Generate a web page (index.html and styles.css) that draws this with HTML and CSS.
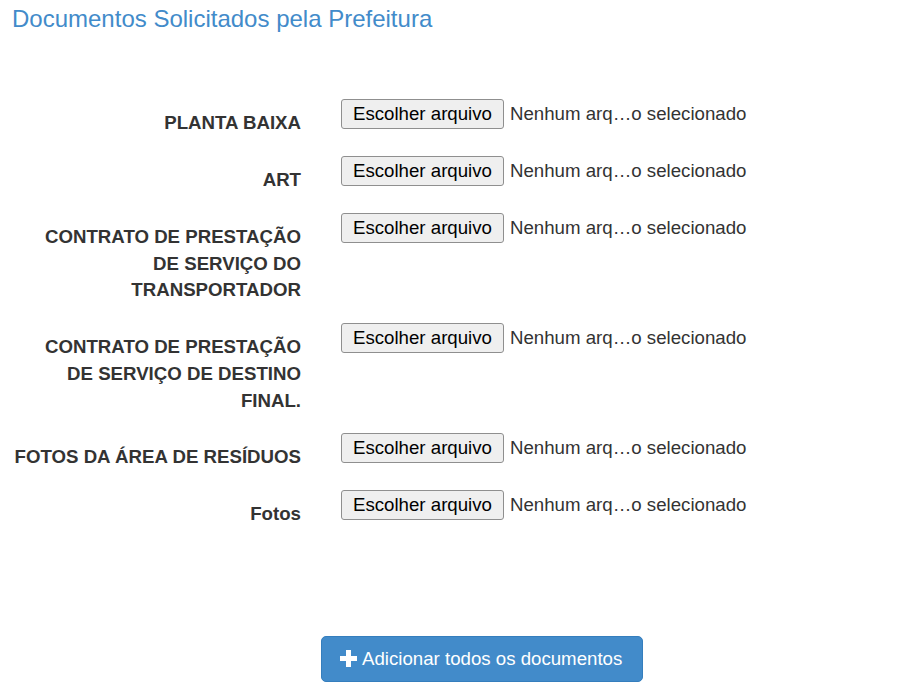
FILE: index.html
```html
<!DOCTYPE html>
<html lang="pt-BR">

<head>
    <meta charset="UTF-8">
    <meta name="viewport" content="width=device-width, initial-scale=1.0">
    <title>Documentos Solicitados pela Prefeitura</title>
    <link rel="stylesheet" href="styles.css">
</head>

<body>
    <h4 class="page-title">Documentos Solicitados pela Prefeitura</h4>

    <form class="doc-form">
        <div class="form-group">
            <label class="control-label">PLANTA BAIXA</label>
            <div class="file-input">
                <span class="file-button">Escolher arquivo</span>
                <span class="file-name">Nenhum arq…o selecionado</span>
            </div>
        </div>

        <div class="form-group">
            <label class="control-label">ART</label>
            <div class="file-input">
                <span class="file-button">Escolher arquivo</span>
                <span class="file-name">Nenhum arq…o selecionado</span>
            </div>
        </div>

        <div class="form-group">
            <label class="control-label">CONTRATO DE PRESTAÇÃO<br>DE SERVIÇO DO<br>TRANSPORTADOR</label>
            <div class="file-input">
                <span class="file-button">Escolher arquivo</span>
                <span class="file-name">Nenhum arq…o selecionado</span>
            </div>
        </div>

        <div class="form-group">
            <label class="control-label">CONTRATO DE PRESTAÇÃO<br>DE SERVIÇO DE DESTINO<br>FINAL.</label>
            <div class="file-input">
                <span class="file-button">Escolher arquivo</span>
                <span class="file-name">Nenhum arq…o selecionado</span>
            </div>
        </div>

        <div class="form-group">
            <label class="control-label">FOTOS DA ÁREA DE RESÍDUOS</label>
            <div class="file-input">
                <span class="file-button">Escolher arquivo</span>
                <span class="file-name">Nenhum arq…o selecionado</span>
            </div>
        </div>

        <div class="form-group">
            <label class="control-label">Fotos</label>
            <div class="file-input">
                <span class="file-button">Escolher arquivo</span>
                <span class="file-name">Nenhum arq…o selecionado</span>
            </div>
        </div>

        <div class="form-actions">
            <button type="button" class="btn-primary">
                <svg class="icon-plus" width="17" height="17" viewBox="0 0 17 17">
                    <path d="M6 0h5v6h6v5h-6v6h-5v-6h-6v-5h6z" fill="#fff"/>
                </svg>
                Adicionar todos os documentos
            </button>
        </div>
    </form>
</body>

</html>
```

FILE: styles.css
```css
body {
    font-family: 'Liberation Sans', Arial, sans-serif;
    font-size: 18.67px;
    color: #333;
    margin: 0;
    padding: 0;
    background-color: #fff;
}

.page-title {
    font-size: 24px;
    font-weight: normal;
    line-height: 26.4px;
    color: #428bca;
    margin: 6px 0 0 12px;
}

.doc-form {
    padding-top: 68px;
}

.form-group {
    display: flex;
    align-items: flex-start;
    margin-bottom: 20px;
}

.control-label {
    box-sizing: border-box;
    width: 301px;
    flex-shrink: 0;
    padding: 10px 0 0 8px;
    font-weight: bold;
    line-height: 26.75px;
    text-align: right;
}

.file-input {
    display: flex;
    align-items: center;
    margin-left: 40px;
    margin-top: -1px;
}

.file-button {
    box-sizing: border-box;
    height: 30px;
    line-height: 28px;
    padding: 0 11px;
    background-color: #efefef;
    border: 1px solid #8f8f8f;
    border-radius: 3px;
    color: #000;
}

.file-name {
    margin-left: 6px;
    color: #333;
}

.form-actions {
    padding: 88px 0 0 321px;
}

.btn-primary {
    display: inline-flex;
    align-items: center;
    box-sizing: border-box;
    width: 322px;
    height: 46px;
    padding: 0 18px;
    font-family: inherit;
    font-size: 18.67px;
    color: #fff;
    background-color: #428bca;
    border: 1px solid #357ebd;
    border-radius: 5px;
    cursor: pointer;
}

.icon-plus {
    margin-right: 5px;
    margin-top: -1px;
}
```
